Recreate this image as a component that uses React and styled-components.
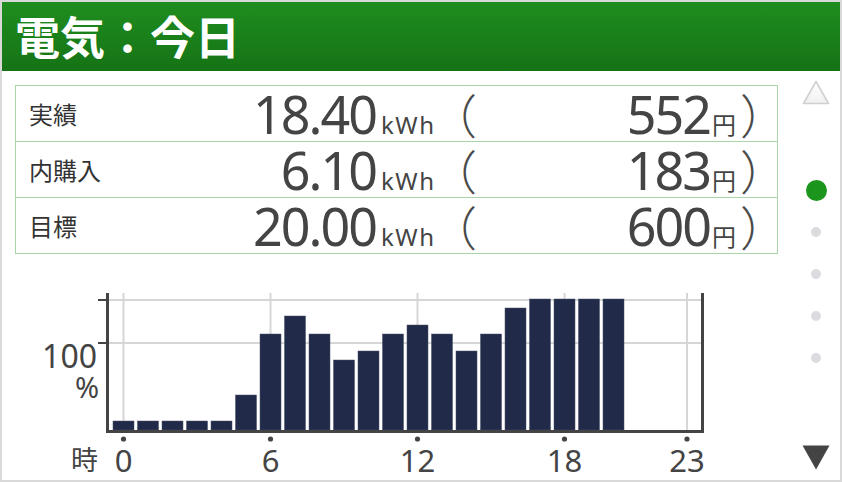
import React from 'react';
import styled, { createGlobalStyle } from 'styled-components';

const Global = createGlobalStyle`
  html, body { margin: 0; padding: 0; background: #fff; }
  body { font-family: "Noto Sans", "Noto Sans CJK JP", sans-serif; }
`;

const Frame = styled.div`
  width: 842px;
  height: 482px;
  box-sizing: border-box;
  border: 2px solid #d9d9d9;
  display: flex;
  flex-direction: column;
  background: #fff;
  overflow: hidden;
`;

const Header = styled.header`
  height: 69px;
  flex: none;
  display: flex;
  align-items: center;
  padding: 0 0 3px 13px;
  box-sizing: border-box;
  background: linear-gradient(#1f8d1f, #157315);
`;

const Title = styled.h1`
  margin: 0;
  font-family: "Noto Sans CJK JP", sans-serif;
  font-weight: 700;
  font-size: 45px;
  line-height: 1;
  color: #fff;
`;

const Body = styled.div`
  flex: 1;
  display: flex;
  min-height: 0;
`;

const Main = styled.main`
  width: 790px;
  flex: none;
  display: flex;
  flex-direction: column;
  padding: 14px 14px 0 13px;
  box-sizing: border-box;
`;

const Table = styled.div`
  border: 1px solid #a8d6a8;
  display: flex;
  flex-direction: column;
`;

const Row = styled.div`
  height: 55px;
  display: flex;
  align-items: center;
  & + & { border-top: 1px solid #a8d6a8; }
`;

const Label = styled.div`
  width: 229px;
  flex: none;
  box-sizing: border-box;
  padding-left: 13px;
  font-family: "Noto Sans CJK JP", sans-serif;
  font-size: 24px;
  line-height: 1;
  color: #333;
`;

const Values = styled.div`
  flex: 1;
  display: flex;
  align-items: baseline;
  color: #444;
  line-height: 1;
  margin-top: 1px;
`;

const Big = styled.span`
  width: ${p => p.$w}px;
  flex: ${p => (p.$w ? 'none' : '1')};
  text-align: right;
  font-family: "Noto Sans", sans-serif;
  font-size: 52px;
  letter-spacing: -2px;
  padding-right: 2px;
  box-sizing: border-box;
`;

const Unit = styled.span`
  width: ${p => p.$w}px;
  flex: none;
  box-sizing: border-box;
  padding-left: ${p => p.$pad || 0}px;
  font-family: ${p => (p.$cjk ? '"Noto Sans CJK JP", sans-serif' : '"Noto Sans", sans-serif')};
  font-size: 24px;
  letter-spacing: ${p => (p.$cjk ? 0 : 1.5)}px;
`;

const Paren = styled.span`
  width: ${p => p.$w}px;
  flex: none;
  font-family: "Noto Sans CJK JP", sans-serif;
  font-weight: 300;
  font-size: 47px;
  color: #4a4a4a;
  white-space: nowrap;
`;

const ChartBox = styled.div`
  flex: 1;
  display: flex;
  & > svg { overflow: visible; }
`;

const Side = styled.aside`
  flex: 1;
  display: flex;
  flex-direction: column;
  align-items: center;
  padding: 9px 0 10px;
  box-sizing: border-box;
`;

const Dots = styled.ul`
  list-style: none;
  margin: 64px 0 0;
  padding: 0;
  display: flex;
  flex-direction: column;
`;

const DotSlot = styled.li`
  height: 42px;
  display: flex;
  align-items: center;
  justify-content: center;
`;

const Dot = styled.span`
  width: ${p => (p.$active ? 21 : 10)}px;
  height: ${p => (p.$active ? 21 : 10)}px;
  border-radius: 50%;
  background: ${p => (p.$active ? '#1b951b' : '#dcdce0')};
`;

const Spacer = styled.div`
  flex: 1;
`;

const rows = [
  { label: '実績', kwh: '18.40', yen: '552' },
  { label: '内購入', kwh: '6.10', yen: '183' },
  { label: '目標', kwh: '20.00', yen: '600' },
];

const bars = [9, 9, 9, 9, 9, 35, 96, 114, 96, 70, 79, 96, 105, 96, 79, 96, 122, 131, 131, 131, 131, 0, 0, 0];
const marks = [0, 6, 12, 18, 23];
const hx = h => 123.5 + 24.5 * h;

function Chart() {
  const ink = '#444';
  const grid = '#d6d6d6';
  return (
    <svg width="763" height="226" viewBox="15 254 763 226">
      <line x1="98" y1="300" x2="702" y2="300" stroke={grid} strokeWidth="2" />
      <line x1="98" y1="343" x2="702" y2="343" stroke={grid} strokeWidth="2" />
      {marks.map(h => (
        <line key={h} x1={hx(h)} y1="293" x2={hx(h)} y2="430" stroke={grid} strokeWidth="2" />
      ))}
      <line x1="98" y1="300" x2="107" y2="300" stroke={ink} strokeWidth="2" />
      <line x1="98" y1="343" x2="107" y2="343" stroke={ink} strokeWidth="2" />
      {bars.map((b, i) =>
        b ? (
          <rect key={i} x={hx(i) - 10.5} y={430 - b} width="21" height={b} fill="#212a48" stroke="#4a5068" strokeWidth="0.5" />
        ) : null
      )}
      <line x1="107.5" y1="293" x2="107.5" y2="433" stroke={ink} strokeWidth="3" />
      <line x1="106" y1="431.5" x2="704" y2="431.5" stroke={ink} strokeWidth="3" />
      <line x1="702.5" y1="293" x2="702.5" y2="433" stroke={ink} strokeWidth="3" />
      {marks.map(h => (
        <circle key={h} cx={hx(h)} cy="439" r="2.6" fill={ink} />
      ))}
      <g fill={ink} fontFamily='"Noto Sans", sans-serif'>
        <text x="97" y="368" fontSize="32" textAnchor="end">100</text>
        <text x="99" y="398" fontSize="29" textAnchor="end">%</text>
        {marks.map(h => (
          <text key={h} x={hx(h)} y="472" fontSize="31" textAnchor="middle">{h}</text>
        ))}
        <text x="71" y="470" fontSize="27" fontFamily='"Noto Sans CJK JP", sans-serif'>時</text>
      </g>
    </svg>
  );
}

function UpArrow() {
  return (
    <svg width="28" height="25" viewBox="0 0 28 25">
      <defs>
        <linearGradient id="ua" x1="0" y1="0" x2="0" y2="1">
          <stop offset="0" stopColor="#ffffff" />
          <stop offset="1" stopColor="#f0f0f0" />
        </linearGradient>
      </defs>
      <polygon points="14,1.5 26.5,23.5 1.5,23.5" fill="url(#ua)" stroke="#d0d0d0" strokeWidth="1.6" strokeLinejoin="round" />
    </svg>
  );
}

function DownArrow() {
  return (
    <svg width="28" height="25" viewBox="0 0 28 25">
      <polygon points="0.5,0.5 27.5,0.5 14,24.5" fill="#444" />
    </svg>
  );
}

export default function App() {
  return (
    <>
      <Global />
      <Frame>
        <Header>
          <Title>電気：今日</Title>
        </Header>
        <Body>
          <Main>
            <Table>
              {rows.map(r => (
                <Row key={r.label}>
                  <Label>{r.label}</Label>
                  <Values>
                    <Big $w={133}>{r.kwh}</Big>
                    <Unit $w={52} $pad={3}>kWh</Unit>
                    <Paren $w={66}>（</Paren>
                    <Big>{r.yen}</Big>
                    <Unit $w={28} $cjk>円</Unit>
                    <Paren $w={37}>）</Paren>
                  </Values>
                </Row>
              ))}
            </Table>
            <ChartBox>
              <Chart />
            </ChartBox>
          </Main>
          <Side>
            <UpArrow />
            <Dots>
              {[true, false, false, false, false].map((a, i) => (
                <DotSlot key={i}>
                  <Dot $active={a} />
                </DotSlot>
              ))}
            </Dots>
            <Spacer />
            <DownArrow />
          </Side>
        </Body>
      </Frame>
    </>
  );
}
